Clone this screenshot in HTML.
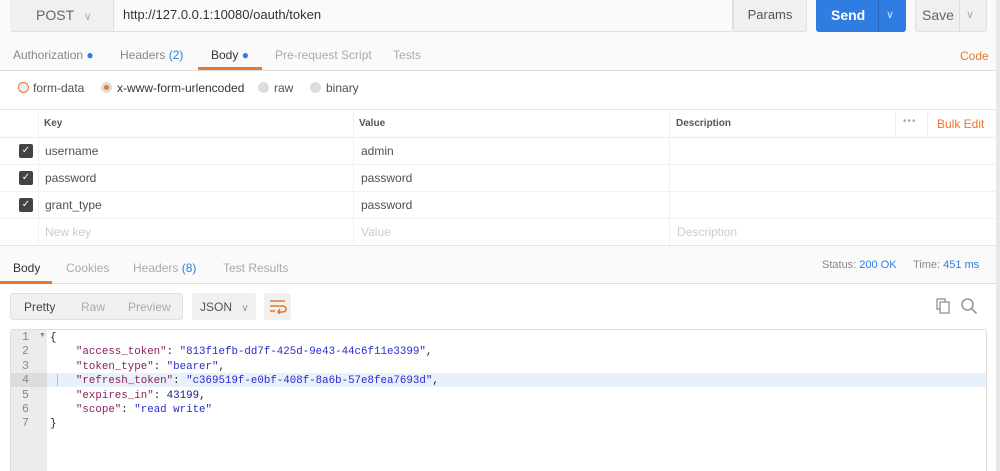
<!DOCTYPE html>
<html><head><style>
*{margin:0;padding:0;box-sizing:border-box}
body{width:1000px;height:471px;overflow:hidden;background:#fff;font-family:"Liberation Sans",sans-serif;font-size:12px;color:#505050;position:relative}
.a{position:absolute}
.mono{font-family:"Liberation Mono",monospace;font-size:12px}
.cb{width:14px;height:14px;background:#444;border-radius:2px;color:#fff;font-size:10px;text-align:center;line-height:14px}
</style></head><body>
<div class="a" style="left:0;top:0;width:996px;height:255px;background:#fafafa"></div>
<div class="a" style="left:996px;top:0;width:4px;height:471px;background:#e8e8e8"></div>
<div class="a" style="left:10px;top:0;width:723px;height:32px;background:#fafafa;border:1px solid #e0e0e0;border-top:none;border-radius:0 0 3px 3px"></div>
<div class="a" style="left:10px;top:0;width:104px;height:31px;background:#f0f0f0;border-right:1px solid #e0e0e0"></div>
<div class="a" style="left:36px;top:7px;font-size:14px;color:#666">POST <span style="color:#aaa;font-size:11px;margin-left:6px">&#8744;</span></div>
<div class="a" style="left:123px;top:7px;font-size:13px;color:#333">http://127.0.0.1:10080/oauth/token</div>
<div class="a" style="left:733px;top:0;width:74px;height:32px;background:#f0f0f0;border:1px solid #e0e0e0;border-top:none;border-radius:0 0 3px 0;text-align:center;line-height:30px;font-size:13px;color:#555">Params</div>
<div class="a" style="left:816px;top:0;width:90px;height:32px;background:#2f7de1;border-radius:0 0 3px 3px"></div>
<div class="a" style="left:878px;top:0;width:1px;height:32px;background:#2565c0"></div>
<div class="a" style="left:831px;top:7px;font-size:14px;color:#fff;font-weight:bold">Send</div>
<div class="a" style="left:886px;top:8px;font-size:11px;color:#cfe0f8">&#8744;</div>
<div class="a" style="left:915px;top:0;width:72px;height:32px;background:#f0f0f0;border:1px solid #e0e0e0;border-top:none;border-radius:0 0 3px 3px"></div>
<div class="a" style="left:959px;top:0;width:1px;height:32px;background:#ddd"></div>
<div class="a" style="left:922px;top:7px;font-size:14px;color:#666">Save</div>
<div class="a" style="left:966px;top:8px;font-size:11px;color:#aaa">&#8744;</div>
<div class="a" style="top:48px;left:13px;font-size:12px;color:#888">Authorization <span style="color:#2f7de1">●</span></div>
<div class="a" style="top:48px;left:120px;color:#888">Headers <span style="color:#2f7de1">(2)</span></div>
<div class="a" style="top:48px;left:211px;color:#333">Body <span style="color:#2f7de1">●</span></div>
<div class="a" style="top:48px;left:275px;color:#aaa">Pre-request Script</div>
<div class="a" style="top:48px;left:393px;color:#aaa">Tests</div>
<div class="a" style="top:49px;left:960px;color:#e8762c;font-size:12px">Code</div>
<div class="a" style="top:70px;left:0;width:996px;height:1px;background:#ddd"></div>
<div class="a" style="top:67px;left:198px;width:64px;height:3px;background:#e8762c"></div>
<div class="a" style="top:71px;left:0;width:996px;height:38px;background:#fff"></div>
<div class="a" style="top:82px;left:18px;width:11px;height:11px;border:1px solid #e8762c;border-radius:50%;background:#eee"></div>
<div class="a" style="top:81px;left:33px">form-data</div>
<div class="a" style="top:82px;left:101px;width:11px;height:11px;border-radius:50%;background:#ddd"><div style="margin:3px;width:5px;height:5px;border-radius:50%;background:#e8762c"></div></div>
<div class="a" style="top:81px;left:117px;color:#333">x-www-form-urlencoded</div>
<div class="a" style="top:82px;left:258px;width:11px;height:11px;border-radius:50%;background:#ddd"></div>
<div class="a" style="top:81px;left:274px">raw</div>
<div class="a" style="top:82px;left:310px;width:11px;height:11px;border-radius:50%;background:#ddd"></div>
<div class="a" style="top:81px;left:326px">binary</div>
<div class="a" style="top:109px;left:0;width:996px;height:137px;background:#fff;border-top:1px solid #e4e4e4;border-bottom:1px solid #e4e4e4"></div>
<div class="a" style="top:137px;left:0;width:996px;height:1px;background:#ececec"></div>
<div class="a" style="top:164px;left:0;width:996px;height:1px;background:#f2f2f2"></div>
<div class="a" style="top:191px;left:0;width:996px;height:1px;background:#f2f2f2"></div>
<div class="a" style="top:218px;left:0;width:996px;height:1px;background:#f2f2f2"></div>
<div class="a" style="top:110px;left:38px;width:1px;height:135px;background:#f0f0f0"></div>
<div class="a" style="top:110px;left:353px;width:1px;height:135px;background:#f0f0f0"></div>
<div class="a" style="top:110px;left:669px;width:1px;height:135px;background:#f0f0f0"></div>
<div class="a" style="top:110px;left:895px;width:1px;height:27px;background:#f0f0f0"></div>
<div class="a" style="top:110px;left:927px;width:1px;height:27px;background:#f0f0f0"></div>
<div class="a" style="top:118px;left:44px;font-size:10px;font-weight:bold;color:#555">Key</div>
<div class="a" style="top:118px;left:359px;font-size:10px;font-weight:bold;color:#555">Value</div>
<div class="a" style="top:118px;left:676px;font-size:10px;font-weight:bold;color:#555">Description</div>
<div class="a" style="top:116px;left:903px;color:#aaa;font-size:10px;letter-spacing:1px">•••</div>
<div class="a" style="top:117px;left:937px;color:#e8762c">Bulk Edit</div>
<div class="a cb" style="top:144px;left:19px">✓</div>
<div class="a cb" style="top:171px;left:19px">✓</div>
<div class="a cb" style="top:198px;left:19px">✓</div>
<div class="a" style="top:144px;left:45px">username</div><div class="a" style="top:144px;left:361px">admin</div>
<div class="a" style="top:171px;left:45px">password</div><div class="a" style="top:171px;left:361px">password</div>
<div class="a" style="top:198px;left:45px">grant_type</div><div class="a" style="top:198px;left:361px">password</div>
<div class="a" style="top:225px;left:45px;color:#ccc">New key</div><div class="a" style="top:225px;left:361px;color:#ccc">Value</div><div class="a" style="top:225px;left:677px;color:#ccc">Description</div>
<div class="a" style="top:246px;left:0;width:996px;height:38px;background:#fafafa;border-bottom:1px solid #ddd"></div>
<div class="a" style="top:261px;left:13px;color:#333">Body</div>
<div class="a" style="top:281px;left:0;width:52px;height:3px;background:#e8762c"></div>
<div class="a" style="top:261px;left:66px;color:#aaa">Cookies</div>
<div class="a" style="top:261px;left:133px;color:#aaa">Headers <span style="color:#2f7de1">(8)</span></div>
<div class="a" style="top:261px;left:223px;color:#aaa">Test Results</div>
<div class="a" style="top:259px;left:822px;font-size:11px;color:#888">Status: <span style="color:#2f7de1">200 OK</span></div>
<div class="a" style="top:259px;left:913px;font-size:11px;color:#888">Time: <span style="color:#2f7de1">451 ms</span></div>
<div class="a" style="top:293px;left:10px;width:173px;height:27px;background:#f0f0f0;border:1px solid #e0e0e0;border-radius:3px"></div>
<div class="a" style="top:300px;left:24px;color:#444">Pretty</div>
<div class="a" style="top:300px;left:81px;color:#aaa">Raw</div>
<div class="a" style="top:300px;left:128px;color:#aaa">Preview</div>
<div class="a" style="top:293px;left:192px;width:64px;height:27px;background:#f0f0f0;border-radius:3px"></div>
<div class="a" style="top:300px;left:200px;color:#555">JSON <span style="color:#999;font-size:10px;margin-left:6px">&#8744;</span></div>
<div class="a" style="top:293px;left:264px;width:27px;height:27px;background:#f0f0f0;border-radius:3px"></div>
<svg class="a" style="top:298px;left:268px" width="20" height="16" viewBox="0 0 20 16" fill="none" stroke="#e8762c" stroke-width="1.6"><path d="M2 3h15M2 8h13a3 3 0 0 1 0 6h-5M12 11l-2 3 2 2M2 13h5"/></svg>
<svg class="a" style="top:297px;left:935px" width="18" height="18" viewBox="0 0 18 18" fill="none" stroke="#999" stroke-width="1.4"><path d="M2 2h8v3M2 2v10h3"/><rect x="5" y="5" width="9" height="11"/></svg>
<svg class="a" style="top:297px;left:960px" width="18" height="18" viewBox="0 0 18 18" fill="none" stroke="#999" stroke-width="1.6"><circle cx="7.5" cy="7.5" r="5.5"/><path d="M11.5 11.5l5 5"/></svg>
<div class="a" style="top:329px;left:10px;width:977px;height:142px;border:1px solid #ddd;border-bottom:none;border-radius:3px 3px 0 0;background:#fff"></div>
<div class="a" style="top:330px;left:11px;width:36px;height:141px;background:#ececec"></div>
<div class="a" style="top:373px;left:11px;width:36px;height:14px;background:#dcdcdc"></div>
<div class="a" style="top:373px;left:47px;width:939px;height:14px;background:#e8f0fb"></div>
<div class="a" style="top:374px;left:57px;width:1px;height:12px;background:#bbb"></div>
<div class="a mono" style="top:331px;left:22px;line-height:14.4px;color:#888;text-align:right;font-size:11.5px">1<br>2<br>3<br>4<br>5<br>6<br>7</div>
<div class="a" style="top:332px;left:39px;font-size:7px;color:#888">▼</div>
<div class="a mono" style="top:331px;left:50px;line-height:14.4px;color:#222;white-space:pre;font-size:10.8px">{
    <span style="color:#8a1f5d">"access_token"</span>: <span style="color:#2a2ad6">"813f1efb-dd7f-425d-9e43-44c6f11e3399"</span>,
    <span style="color:#8a1f5d">"token_type"</span>: <span style="color:#2a2ad6">"bearer"</span>,
    <span style="color:#8a1f5d">"refresh_token"</span>: <span style="color:#2a2ad6">"c369519f-e0bf-408f-8a6b-57e8fea7693d"</span>,
    <span style="color:#8a1f5d">"expires_in"</span>: <span style="color:#1a1a8a">43199</span>,
    <span style="color:#8a1f5d">"scope"</span>: <span style="color:#2a2ad6">"read write"</span>
}</div>
</body></html>
